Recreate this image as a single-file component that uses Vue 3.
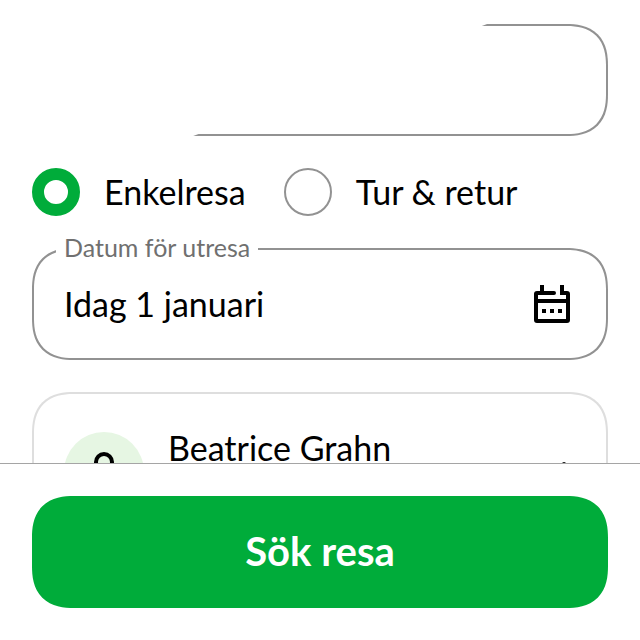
<template>
  <div class="app">
    <main class="content">
      <input class="station" type="text" aria-label="Resa" />

      <div class="trip-types" role="radiogroup">
        <label v-for="type in tripTypes" :key="type.value" class="trip-type">
          <input v-model="tripType" type="radio" name="trip" :value="type.value" />
          <span>{{ type.label }}</span>
        </label>
      </div>

      <fieldset class="date-field">
        <legend><label for="date">Datum för utresa</label></legend>
        <div class="date-row">
          <input id="date" v-model="date" type="text" readonly />
          <button class="icon-button" type="button" aria-label="Kalender">
            <svg viewBox="0 0 48 48" width="48" height="48">
              <path d="M12 5h4v6h10a2 2 0 0 1 0 4H10v4h28v-4h-6V5h4v6h3a3 3 0 0 1 3 3v26a3 3 0 0 1-3 3H9a3 3 0 0 1-3-3V14a3 3 0 0 1 3-3h3zM10 23v16h28V23z" fill-rule="evenodd" />
              <path d="M14 29h4v4h-4zM22 29h4v4h-4zM30 29h4v4h-4z" />
            </svg>
          </button>
        </div>
      </fieldset>

      <section class="traveller">
        <span class="avatar">
          <svg viewBox="0 0 80 80" width="80" height="80">
            <circle cx="40" cy="30" r="8" />
            <path d="M24 58v-4a10 10 0 0 1 10-10h12a10 10 0 0 1 10 10v4" />
          </svg>
        </span>
        <span class="traveller-name">{{ traveller }}</span>
        <button class="icon-button edit" type="button" aria-label="Ändra">
          <svg viewBox="0 0 48 48" width="48" height="48">
            <path d="M12 44l3-9 21-19 6 6-21 19z" />
          </svg>
        </button>
      </section>
    </main>

    <footer class="footer">
      <button class="search" type="button">Sök resa</button>
    </footer>
  </div>
</template>

<script setup>
import { ref } from 'vue'

const tripTypes = [
  { value: 'single', label: 'Enkelresa' },
  { value: 'return', label: 'Tur & retur' }
]

const tripType = ref('single')
const date = ref('Idag 1 januari')
const traveller = ref('Beatrice Grahn')
</script>

<style>
body {
  margin: 0;
  background: #fff;
}
</style>

<style scoped>
.app {
  display: flex;
  flex-direction: column;
  height: 100vh;
  font-family: Lato, sans-serif;
  font-size: 34px;
  line-height: 40px;
  color: #000;
}

.app * {
  box-sizing: border-box;
}

input,
button {
  margin: 0;
  font: inherit;
  color: inherit;
}

.content {
  flex: 1;
  min-height: 0;
  overflow: hidden;
  padding: 24px 32px 0;
}

.station,
.date-field,
.traveller,
.search {
  border-radius: 36px;
}

@supports (corner-shape: squircle) {
  .station,
  .date-field,
  .traveller,
  .search {
    border-radius: 42px;
    corner-shape: superellipse(1.3);
  }
}

.station {
  display: block;
  width: 100%;
  height: 112px;
  padding: 0 30px;
  border: 2px solid #929292;
  background: none;
  /* diagonal reveal of the outline */
  clip-path: polygon(79% 0, 100% 0, 100% 100%, 28% 100%);
}

.trip-types {
  display: flex;
  gap: 38px;
  margin-top: 32px;
}

.trip-type {
  display: flex;
  align-items: center;
  gap: 24px;
}

.trip-type input {
  appearance: none;
  width: 48px;
  height: 48px;
  border: 2px solid #929292;
  border-radius: 50%;
  background: #fff;
}

.trip-type input:checked {
  border: 12px solid #00ac3a;
}

.date-field {
  margin: 18px 0 0;
  padding: 0 30px 0 22px;
  border: 2px solid #929292;
  min-width: 0;
}

.date-field legend {
  padding: 0 8px 4px;
  font-size: 25px;
  line-height: 26px;
  color: #707070;
}

.date-row {
  display: flex;
  align-items: center;
  height: 94px;
  padding: 0 0 14px 8px;
}

.date-row input {
  flex: 1;
  min-width: 0;
  padding: 0;
  border: 0;
  background: none;
}

.icon-button {
  flex: none;
  width: 48px;
  height: 48px;
  padding: 0;
  border: 0;
  background: none;
}

.icon-button svg,
.avatar svg {
  display: block;
}

.traveller {
  display: flex;
  align-items: flex-start;
  gap: 24px;
  margin-top: 32px;
  padding: 38px 30px;
  border: 2px solid #dedede;
}

.avatar {
  flex: none;
  border-radius: 50%;
  background: #e6f6e3;
}

.avatar svg {
  fill: none;
  stroke: #000;
  stroke-width: 4;
}

.traveller-name {
  flex: 1;
  line-height: 32px;
}

.edit {
  align-self: center;
}

.edit svg {
  fill: none;
  stroke: #000;
  stroke-width: 4;
  stroke-linejoin: round;
}

.footer {
  padding: 32px;
  border-top: 1px solid #a5a5a5;
  background: #fff;
}

.search {
  display: block;
  width: 100%;
  height: 112px;
  padding: 0 0 2px;
  border: 0;
  background: #00ac3a;
  color: #fff;
  font-size: 40px;
  font-weight: 700;
}
</style>
